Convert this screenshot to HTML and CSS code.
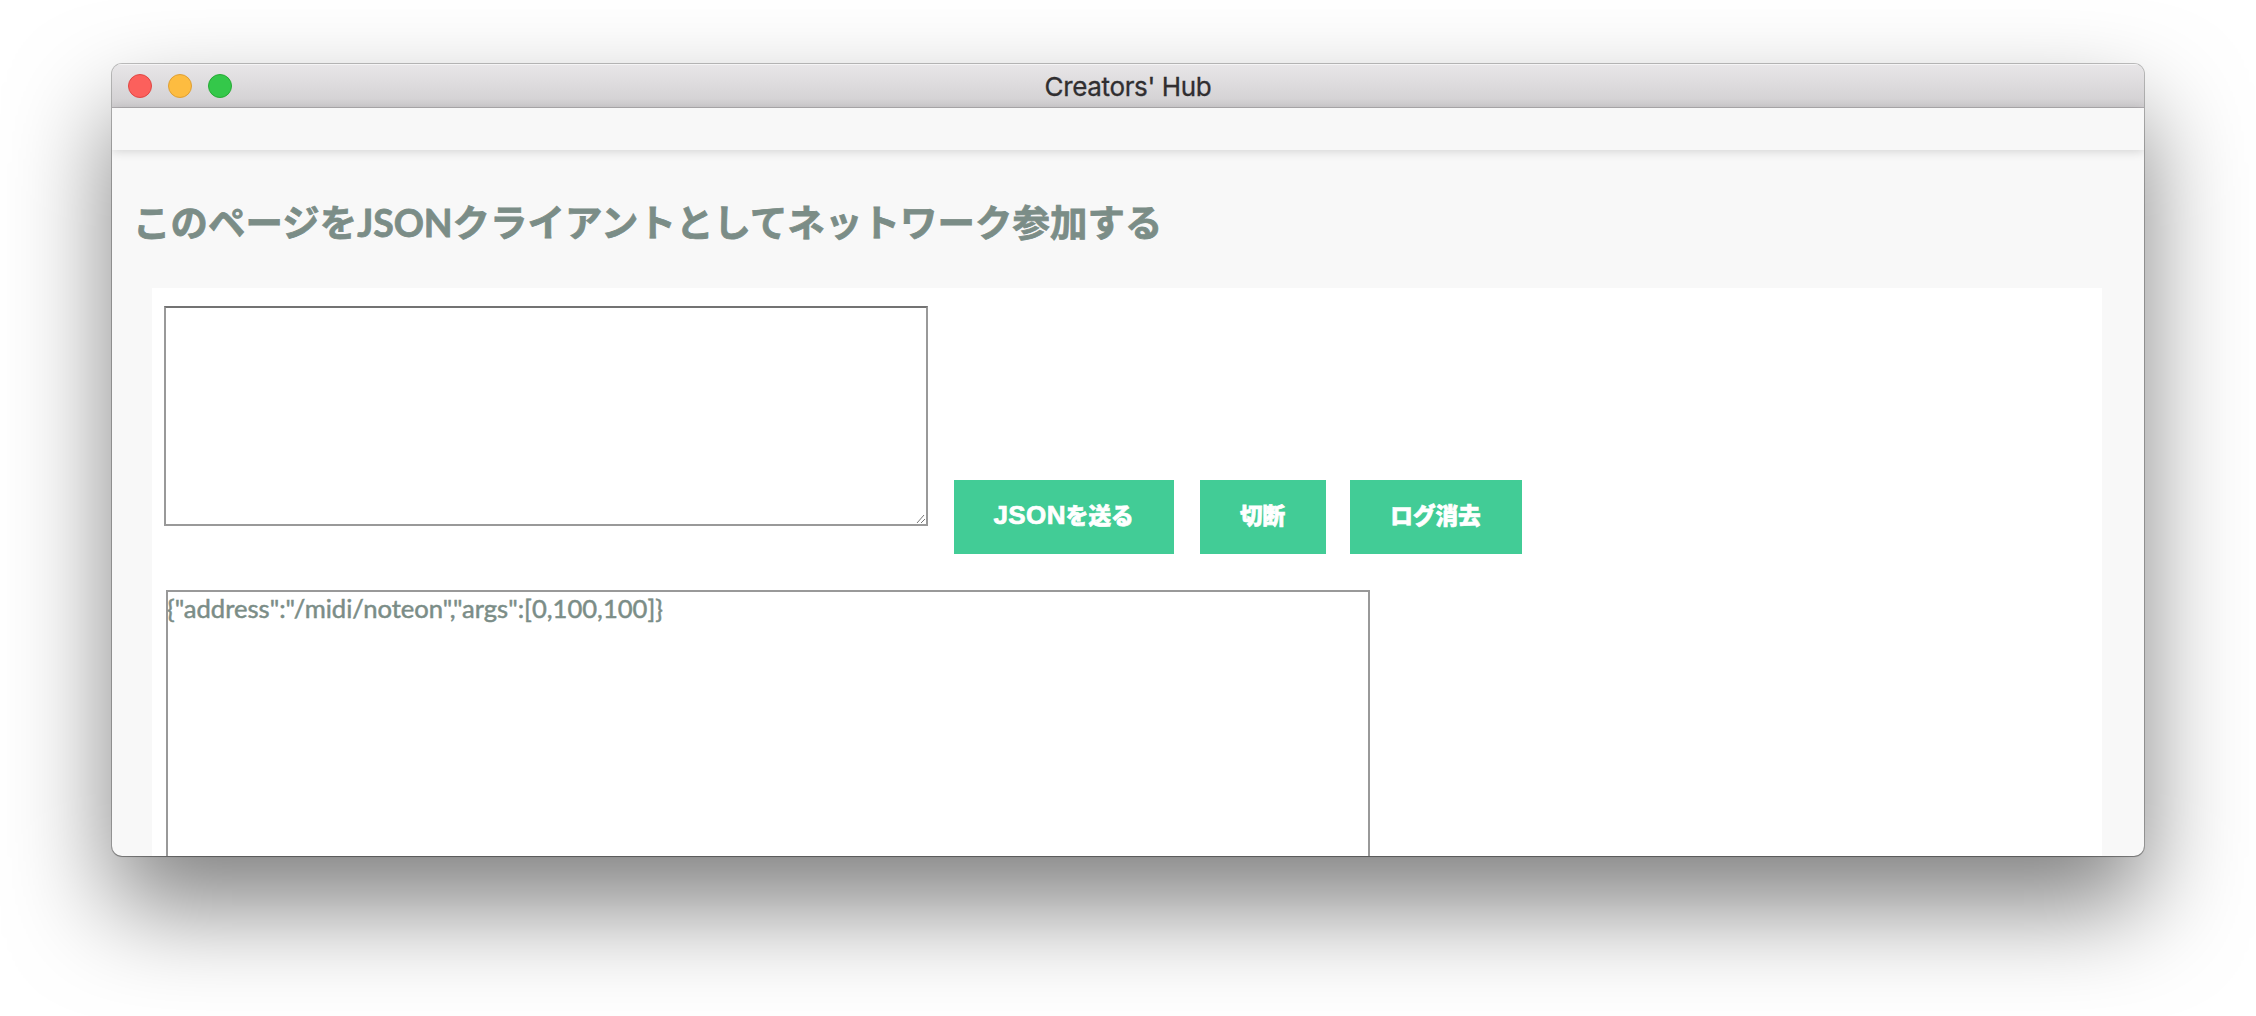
FILE: index.html
```html
<!DOCTYPE html>
<html lang="ja">
<head>
<meta charset="utf-8">
<title>Creators' Hub</title>
<link rel="stylesheet" href="styles.css">
</head>
<body>
<div class="window">
  <header class="titlebar">
    <div class="lights"><span class="light close"></span><span class="light minimize"></span><span class="light maximize"></span></div>
    <div class="title">Creators' Hub</div>
    <div></div>
  </header>
  <nav class="navbar"></nav>
  <main class="content">
    <h1 class="heading">このページを<span class="latin">JSON</span>クライアントとしてネットワーク参加する</h1>
    <section class="panel">
      <div class="controls">
        <div class="input-wrap">
          <textarea class="json-input"></textarea>
          <svg class="grip" viewBox="0 0 10 10"><path d="M1 9L8 1M5 9L9 5" /></svg>
        </div>
        <button class="button send"><span class="button-latin">JSON</span>を送る</button>
        <button class="button disconnect">切断</button>
        <button class="button clear">ログ消去</button>
      </div>
      <div class="log">{"address":"/midi/noteon","args":[0,100,100]}</div>
    </section>
  </main>
</div>
</body>
</html>
```
FILE: styles.css
```css
* { box-sizing: border-box; }
html { height: 100%; overflow: hidden; }
body {
  margin: 0;
  height: 1016px;
  padding: 64px 112px 160px;
  overflow: hidden;
  background: #fff;
  font-family: Lato, "Noto Sans CJK JP", sans-serif;
}
.window {
  height: 792px;
  display: flex;
  flex-direction: column;
  overflow: hidden;
  border-radius: 10px;
  background: #f8f8f8;
  box-shadow: 0 0 0 1px rgba(0, 0, 0, .24), 0 1px 1px rgba(0, 0, 0, .2), 0 50px 100px rgba(0, 0, 0, .5);
}
.titlebar {
  flex: none;
  height: 44px;
  padding: 0 16px;
  display: grid;
  grid-template-columns: 1fr auto 1fr;
  align-items: center;
  background: linear-gradient(#e8e6e8, #d1cfd1);
  border-bottom: 1px solid #b1aeb1;
  box-shadow: inset 0 1px #f5f4f5;
}
.lights { display: flex; gap: 16px; }
.light { width: 24px; height: 24px; border-radius: 50%; border: 1px solid; }
.close { background: #fc605c; border-color: #df4744; }
.minimize { background: #fdbc40; border-color: #de9f34; }
.maximize { background: #34c84a; border-color: #27aa35; }
.title {
  padding-top: 3px;
  font: 26px/40px Inter, sans-serif;
  letter-spacing: -.35px;
  color: #302e30;
  -webkit-text-stroke: .3px #302e30;
}
.navbar {
  flex: none;
  height: 42px;
  background: #f8f8f8;
  box-shadow: 0 1px 10px rgba(0, 0, 0, .16);
}
.content { flex: 1; padding: 46px 42px 0 40px; }
.heading {
  margin: 0 0 29px -19px;
  height: 63px;
  font-size: 37.4px;
  line-height: 54px;
  font-weight: 700;
  letter-spacing: .12px;
  white-space: nowrap;
  color: #7b8d87;
  -webkit-text-stroke: .8px #7b8d87;
}
.latin { letter-spacing: -.1px; }
.panel { height: 580px; padding: 18px 12px 0; background: #fff; }
.controls { display: flex; height: 248px; align-items: flex-end; }
.input-wrap { position: relative; align-self: flex-start; height: 220px; margin-right: 26px; }
.json-input {
  display: block;
  width: 764px;
  height: 220px;
  margin: 0;
  border: 2px solid #999;
  border-top-color: #737373;
  border-radius: 0;
  background: #fff;
  resize: none;
}
.grip {
  position: absolute;
  right: 2px;
  bottom: 2px;
  width: 10px;
  height: 10px;
  fill: none;
  stroke: #777;
}
.button {
  height: 74px;
  padding: 0 1px 4px 0;
  border: 0;
  background: #42cc96;
  color: #fff;
  font: 900 22.6px/70px "Noto Sans CJK JP", sans-serif;
  -webkit-text-stroke: .7px #fff;
}
.button-latin { font-family: "Liberation Sans", sans-serif; font-size: 26px; line-height: 1; letter-spacing: .4px; }
.send { width: 220px; margin-right: 26px; }
.disconnect { width: 126px; margin-right: 24px; }
.clear { width: 172px; }
.log {
  width: 1204px;
  height: 600px;
  margin: 36px 0 0 2px;
  border: 2px solid #999;
  color: #7b8d87;
  font-size: 25.6px;
  line-height: 32px;
  text-indent: -1px;
  -webkit-text-stroke: .5px #7b8d87;
}
```
